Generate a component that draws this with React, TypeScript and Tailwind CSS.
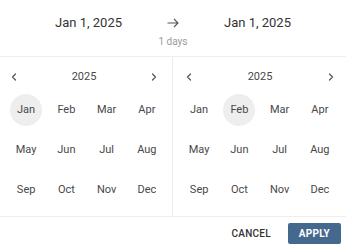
import { ChevronLeft, ChevronRight } from "lucide-react";

const months = ["Jan", "Feb", "Mar", "Apr", "May", "Jun", "Jul", "Aug", "Sep", "Oct", "Nov", "Dec"];

function Panel({ selected, left }: { selected: string; left?: boolean }) {
  return (
    <div className={`flex flex-col pt-[8px] pb-[6px] ${left ? "w-[173px] border-r border-[#ececec]" : "flex-1"}`}>
      <div
        className={`h-6 flex items-center justify-between text-[#555] ${
          left ? "pl-[8px] pr-[12px]" : "pl-[10px] pr-[9px]"
        }`}
      >
        <span className="w-3 flex justify-center">
          <ChevronLeft size={18} strokeWidth={2.4} />
        </span>
        <span className="text-[11px] text-[#484848]">2025</span>
        <span className="w-3 flex justify-center">
          <ChevronRight size={18} strokeWidth={2.4} />
        </span>
      </div>
      <div className="grid grid-cols-4 px-[6px] w-[173px] mt-[1px]">
        {months.map((m) => (
          <div key={m} className="h-10 flex items-center justify-center">
            <span
              className={`w-8 h-8 rounded-full flex items-center justify-center text-[11px] text-[#484848] ${
                m === selected ? "bg-[#eeeeee]" : ""
              }`}
            >
              {m}
            </span>
          </div>
        ))}
      </div>
    </div>
  );
}

export default function App() {
  return (
    <div className="w-[346px] h-[250px] bg-white flex flex-col" style={{ fontFamily: "Roboto, sans-serif" }}>
      <div className="h-[57px] flex flex-col items-center border-b border-[#eeeeee]">
        <div className="flex items-center gap-[45px] pt-[12px] h-[33px] text-[13px] text-[#333]">
          <span>Jan 1, 2025</span>
          <svg width="12" height="10" viewBox="0 0 12 10" fill="none" stroke="#555" strokeWidth="1.1">
            <path d="M0.5 5h10.5M7 1l4 4-4 4" />
          </svg>
          <span>Jan 1, 2025</span>
        </div>
        <div className="text-[10px] text-[#9a9a9a] leading-none mt-[4px]">1 days</div>
      </div>
      <div className="flex border-b border-[#eeeeee]">
        <Panel selected="Jan" left />
        <Panel selected="Feb" />
      </div>
      <div className="flex-1 flex items-center justify-end pr-[5px] gap-[5px]">
        <button className="px-3 h-[21px] text-[10px] font-medium text-[#333] tracking-wide">CANCEL</button>
        <button className="px-[11px] h-[21px] text-[10px] font-bold text-white bg-[#45688e] rounded-[2px] tracking-wide">
          APPLY
        </button>
      </div>
    </div>
  );
}
